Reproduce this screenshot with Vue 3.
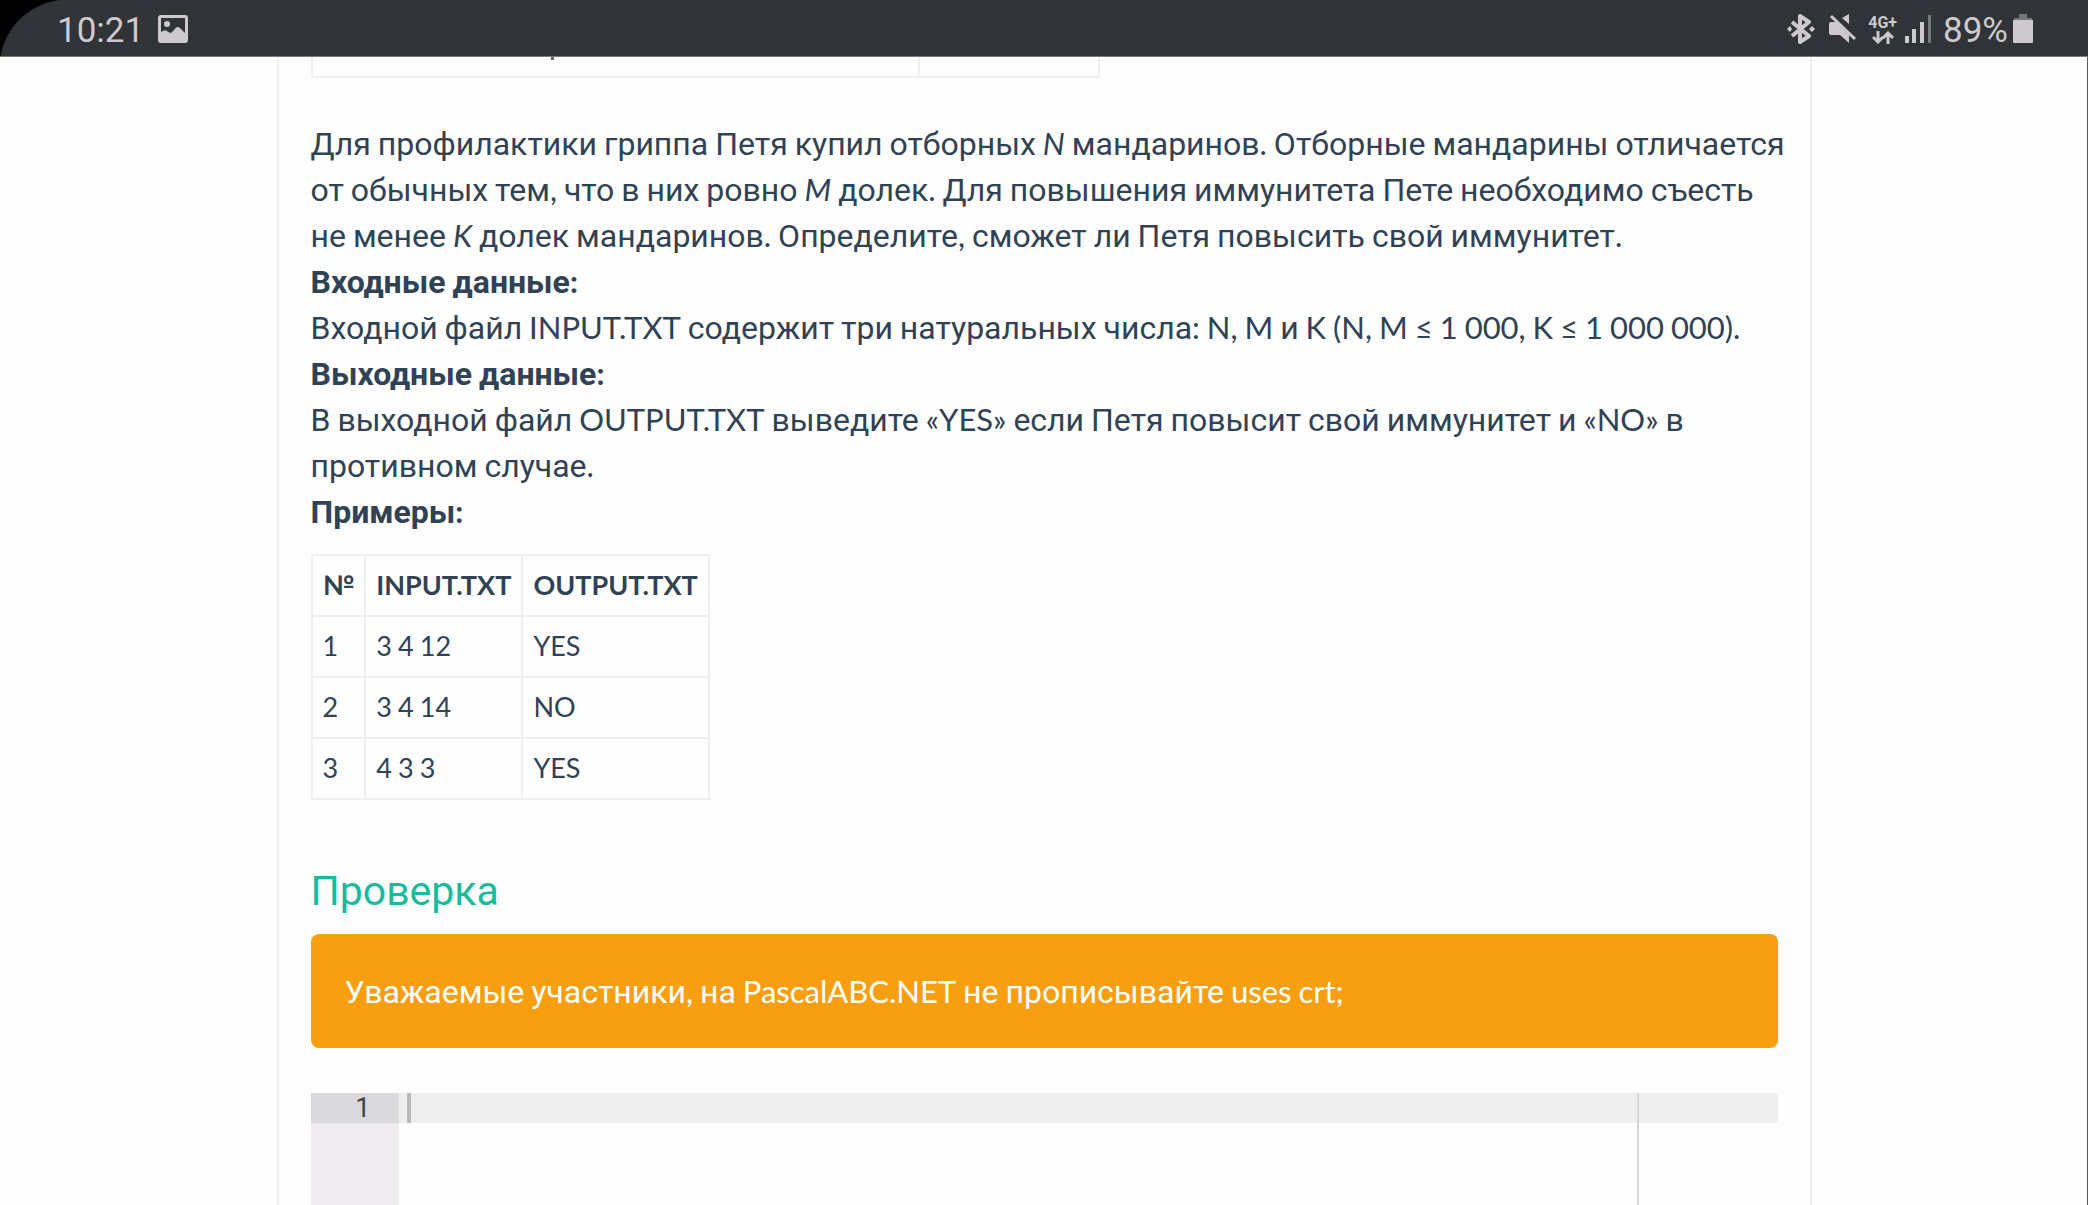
<script setup>
import { h, ref } from 'vue'

const code = ref('')

const samples = [
  { id: 1, input: '3 4 12', output: 'YES' },
  { id: 2, input: '3 4 14', output: 'NO' },
  { id: 3, input: '4 3 3', output: 'YES' }
]

// Cyrillic words use Roboto; Latin letters, digits and punctuation use Lato.
const Mixed = (props) =>
  props.text
    .split(/([\u0400-\u04FF]+|\s+)/)
    .filter((run) => run !== '')
    .map((run) => {
      if (/[\u0400-\u04FF]/.test(run)) return h('span', { class: 'run-cyrillic' }, run)
      if (/\s/.test(run)) return h('span', { class: 'run-space' }, run)
      return run
    })
Mixed.props = ['text']
</script>

<template>
  <div class="screen">
    <header class="status">
      <div class="status-group">
        <time class="clock">10:21</time>
        <svg class="picture" width="30" height="28" viewBox="0 0 30 28">
          <path fill="#cdc9cd" fill-rule="evenodd" d="M3 0h24a3 3 0 0 1 3 3v22a3 3 0 0 1-3 3H3a3 3 0 0 1-3-3V3a3 3 0 0 1 3-3zM3 3v14l2-1q3-2 5 1l3 1 3-3q3-5 6-2l5 5V3z" />
          <circle cx="9" cy="9" r="3" fill="#cdc9cd" />
        </svg>
      </div>
      <div class="status-group">
        <svg width="28" height="30" viewBox="0 0 28 30">
          <path d="M5 8l17 14-9 6V2l9 6L5 22" fill="none" stroke="#cdc9cd" stroke-width="4" stroke-linejoin="round" />
          <path d="M0 15l3-3 2 3-2 3zM28 15l-3-3-3 3 3 3z" fill="#cdc9cd" />
        </svg>
        <svg class="mute" width="28" height="30" viewBox="0 0 28 30">
          <path d="M0 10q0-2 2-2h5l13 13v8l-9-8H2q-2 0-2-2zM20 0v10l-7-6z" fill="#cdc9cd" />
          <path d="M2 2l24 23" stroke="#cdc9cd" stroke-width="3" />
        </svg>
        <div class="network">
          <span>4G+</span>
          <svg width="22" height="13" viewBox="0 0 22 13">
            <path d="M6 0v10M1 6l5 5 5-5M16 13V3M11 7l5-5 5 5" fill="none" stroke="#cdc9cd" stroke-width="3" />
          </svg>
        </div>
        <svg class="signal" width="27" height="28" viewBox="0 0 27 28">
          <path d="M0 21h4v7H0zM7 14h4v14H7zM15 7h4v21h-4z" fill="#cdc9cd" />
          <path d="M23 0h3v28h-3z" fill="#77777b" />
        </svg>
        <span class="charge">89%</span>
        <svg width="20" height="30" viewBox="0 0 20 30">
          <path d="M6 0h8v4h5v3H1V4h5z" fill="#77777b" />
          <path d="M0 6h20v22q0 1-1 1H1q-1 0-1-1z" fill="#cdc9cd" />
        </svg>
      </div>
    </header>

    <main class="content">
      <div class="limits">
        <div class="limits-name"><span class="descender"></span></div>
        <div class="limits-value"></div>
      </div>

      <section class="statement">
        <p class="story">
          <Mixed text="Для профилактики гриппа Петя купил отборных " /><em>N</em><Mixed text=" мандаринов. Отборные мандарины отличается" /><br />
          <Mixed text="от обычных тем, что в них ровно " /><em>M</em><Mixed text=" долек. Для повышения иммунитета Пете необходимо съесть" /><br />
          <Mixed text="не менее " /><em>K</em><Mixed text=" долек мандаринов. Определите, сможет ли Петя повысить свой иммунитет." />
        </p>
        <h3><Mixed text="Входные данные:" /></h3>
        <p><Mixed text="Входной файл INPUT.TXT содержит три натуральных числа: N, M и K (N, M ≤ 1 000, K ≤ 1 000 000)." /></p>
        <h3><Mixed text="Выходные данные:" /></h3>
        <p><Mixed text="В выходной файл OUTPUT.TXT выведите «YES» если Петя повысит свой иммунитет и «NO» в противном случае." /></p>
        <h3><Mixed text="Примеры:" /></h3>
      </section>

      <table class="samples">
        <thead>
          <tr>
            <th scope="col">№</th>
            <th scope="col">INPUT.TXT</th>
            <th scope="col">OUTPUT.TXT</th>
          </tr>
        </thead>
        <tbody>
          <tr v-for="sample in samples" :key="sample.id">
            <td>{{ sample.id }}</td>
            <td><Mixed :text="sample.input" /></td>
            <td>{{ sample.output }}</td>
          </tr>
        </tbody>
      </table>

      <h2 class="title">Проверка</h2>
      <div class="notice" role="alert">
        <Mixed text="Уважаемые участники, на PascalABC.NET не прописывайте uses crt;" />
      </div>

      <div class="editor">
        <div class="gutter"><div class="line-number">1</div></div>
        <div class="code">
          <textarea v-model="code" aria-label="Код программы" spellcheck="false"></textarea>
          <span class="caret"></span>
          <span class="print-margin"></span>
        </div>
      </div>
    </main>
  </div>
</template>

<style>
html,
body {
  margin: 0;
  background: #fff;
}

.run-cyrillic {
  font-family: Roboto, sans-serif;
  font-size: 32px;
  line-height: 1;
}

.run-space {
  font-family: "Noto Sans CJK SC", sans-serif;
  line-height: 1;
}
</style>

<style scoped>
.screen {
  display: flex;
  flex-direction: column;
  min-height: 100vh;
  background: #fefefe;
  box-shadow: inset -1px 0 #55575a;
  color: #304255;
  font-family: Lato, Roboto, sans-serif;
  font-size: 31px;
  line-height: 46px;
}

.status {
  display: flex;
  justify-content: space-between;
  align-items: center;
  box-sizing: border-box;
  height: 57px;
  padding: 2px 55px 0 57px;
  border-bottom: 1px solid #77797c;
  background: radial-gradient(circle at 68px 68px, #303338 68px, #000 69px) 0 0 / 68px 56px no-repeat #303338;
  color: #cdc9cd;
  font-family: Roboto, sans-serif;
  font-size: 35px;
  line-height: 54px;
}

.status-group {
  display: flex;
  align-items: center;
}

.clock {
  padding-top: 4px;
}

.picture {
  margin-left: 14px;
}

.mute {
  margin-left: 14px;
}

.network {
  display: flex;
  flex-direction: column;
  align-items: center;
  margin-left: 11px;
  font-size: 16px;
  font-weight: 700;
  line-height: 16px;
}

.signal {
  margin-left: 8px;
}

.charge {
  margin: 4px 5px 0 11px;
}

.content {
  box-sizing: border-box;
  display: flex;
  flex: 1;
  flex-direction: column;
  width: 100%;
  max-width: 1535px;
  margin: 0 auto;
  padding: 0 32px;
  border: solid #ecf0f1;
  border-width: 0 2px;
}

.limits {
  display: flex;
  box-sizing: border-box;
  width: 789px;
  max-width: 100%;
  height: 21px;
  border: solid #ecf0f1;
  border-width: 0 2px 2px;
}

.limits-name {
  flex: 1;
  padding-left: 238px;
}

.descender {
  display: block;
  width: 3px;
  height: 3px;
  background: #5b6874;
}

.limits-value {
  width: 178px;
  border-left: 2px solid #ecf0f1;
}

.statement {
  margin-top: 42px;
}

.statement p,
.statement h3 {
  margin: 0;
  font-size: 31px;
  line-height: 46px;
}

.statement .story {
  white-space: nowrap;
}

.samples {
  align-self: flex-start;
  margin-top: 20px;
  border-collapse: collapse;
  font-size: 27px;
  line-height: 40px;
}

.samples th,
.samples td {
  height: 40px;
  padding: 9px 10px 10px;
  border: 2px solid #ecf0f1;
  text-align: left;
}

.title {
  margin: 68px 0 20px;
  color: #18bc9c;
  font-family: Roboto, sans-serif;
  font-size: 41px;
  font-weight: 400;
  line-height: 46px;
}

.notice {
  padding: 34px;
  border-radius: 8px;
  background: #f79f10;
  color: #fff;
}

.editor {
  display: flex;
  flex: 1;
  margin-top: 45px;
  font-family: Roboto, sans-serif;
  font-size: 27px;
  line-height: 30px;
}

.gutter {
  width: 88px;
  background: #eeebee;
  color: #444;
}

.line-number {
  box-sizing: border-box;
  height: 30px;
  padding-right: 28px;
  background: #dadadc;
  text-align: right;
}

.code {
  position: relative;
  flex: 1;
  background: linear-gradient(#eee, #eee) 0 0 / 100% 30px no-repeat;
}

textarea {
  display: block;
  box-sizing: border-box;
  width: 100%;
  height: 100%;
  padding: 0 8px;
  border: 0;
  outline: 0;
  background: transparent;
  font: inherit;
  resize: none;
}

.caret {
  position: absolute;
  top: 0;
  left: 8px;
  width: 4px;
  height: 30px;
  background: #bbb;
}

.print-margin {
  position: absolute;
  top: 0;
  bottom: 0;
  left: 1238px;
  width: 2px;
  background: #d8d8d8;
}
</style>
